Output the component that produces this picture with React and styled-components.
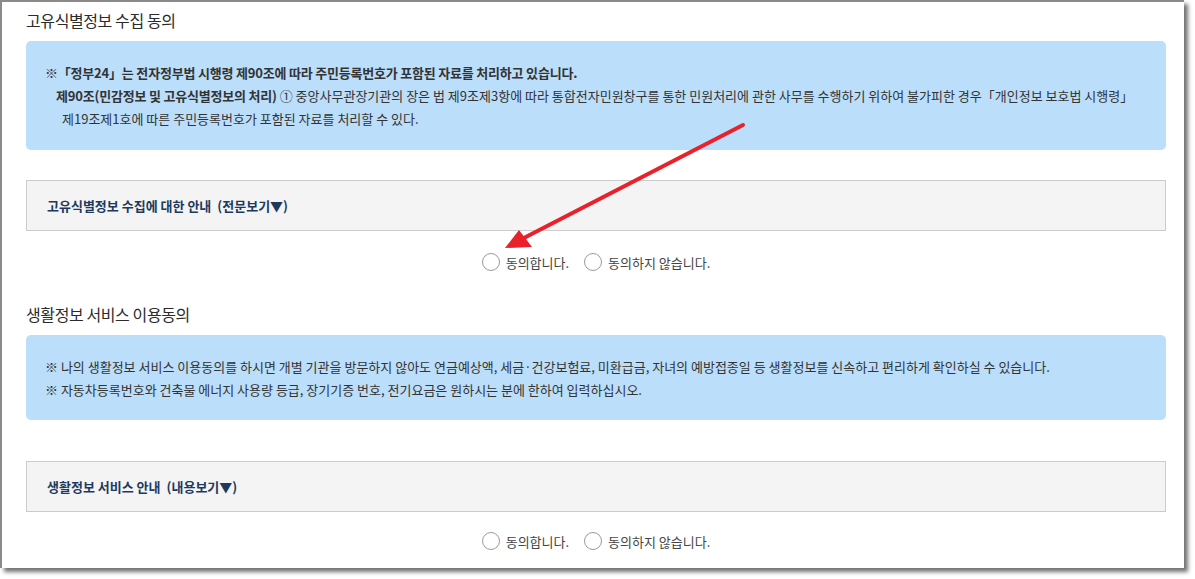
import React from 'react';
import styled, { createGlobalStyle } from 'styled-components';

const GlobalStyle = createGlobalStyle`
  html, body {
    margin: 0;
    padding: 0;
    background: #ffffff;
  }
  body {
    font-family: 'Noto Sans CJK KR', 'Noto Sans', sans-serif;
    color: #333333;
  }
`;

const Stage = styled.div`
  position: relative;
  width: 1195px;
  height: 579px;
  overflow: hidden;
`;

const Window = styled.div`
  box-sizing: border-box;
  width: 1184px;
  height: 568px;
  background: #ffffff;
  border-top: 2px solid #8a8a8a;
  border-left: 2px solid #8a8a8a;
  box-shadow: 4px 4px 4px rgba(0, 0, 0, 0.55);
  padding: 0 18px 0 24px;
  overflow: hidden;
`;

const Section = styled.section`
  display: flex;
  flex-direction: column;
`;

const Title = styled.h2`
  margin: ${(p) => p.$top}px 0 11px;
  font-size: 16px;
  line-height: 20px;
  font-weight: 400;
  letter-spacing: -0.4px;
  color: #2b2b2b;
`;

const Notice = styled.div`
  background: #bbdefa;
  border-radius: 5px;
  padding: 20px 0 ${(p) => p.$bottom}px 19px;
  font-size: 13px;
  line-height: 23px;
  color: #333333;
`;

const Line = styled.p`
  margin: 0;
  padding-left: ${(p) => p.$indent || 0}px;
  white-space: nowrap;
  font-weight: ${(p) => (p.$bold ? 700 : 400)};
  letter-spacing: ${(p) => (p.$bold ? '-0.2px' : 'normal')};
`;

const Strong = styled.b`
  font-weight: 700;
  letter-spacing: -0.2px;
`;

const Guide = styled.div`
  margin-top: ${(p) => p.$top}px;
  height: 49px;
  display: flex;
  align-items: center;
  padding-left: 20px;
  background: #f4f4f4;
  border: 1px solid #cccccc;
  font-size: 13px;
  font-weight: 700;
  color: #1d3a5e;
`;

const Toggle = styled.span`
  margin-left: 6px;
`;

const Choices = styled.div`
  display: flex;
  justify-content: center;
  align-items: center;
  gap: 15px;
  height: 20px;
  margin-top: ${(p) => p.$top}px;
`;

const Choice = styled.label`
  display: flex;
  align-items: center;
  gap: 6px;
  font-size: 13px;
  color: #444444;
`;

const Radio = styled.input.attrs({ type: 'radio' })`
  appearance: none;
  margin: 0;
  width: 18px;
  height: 18px;
  border: 1px solid #9a9a9a;
  border-radius: 50%;
  background: #ffffff;
`;

const Arrow = styled.svg`
  position: absolute;
  left: 0;
  top: 0;
  pointer-events: none;
`;

const Agree = ({ name, top }) => (
  <Choices $top={top}>
    <Choice>
      <Radio name={name} />
      동의합니다.
    </Choice>
    <Choice>
      <Radio name={name} />
      동의하지 않습니다.
    </Choice>
  </Choices>
);

const App = () => {
  return (
    <Stage>
      <GlobalStyle />
      <Window>
        <Section>
          <Title $top={8}>고유식별정보 수집 동의</Title>
          <Notice $bottom={20}>
            <Line $bold>※「정부24」는 전자정부법 시행령 제90조에 따라 주민등록번호가 포함된 자료를 처리하고 있습니다.</Line>
            <Line $indent={11}>
              <Strong>제90조(민감정보 및 고유식별정보의 처리)</Strong> ① 중앙사무관장기관의 장은 법 제9조제3항에 따라
              통합전자민원창구를 통한 민원처리에 관한 사무를 수행하기 위하여 불가피한 경우「개인정보 보호법 시행령」
            </Line>
            <Line $indent={17}>제19조제1호에 따른 주민등록번호가 포함된 자료를 처리할 수 있다.</Line>
          </Notice>
          <Guide $top={30}>고유식별정보 수집에 대한 안내 <Toggle>(전문보기▼)</Toggle></Guide>
          <Agree name='unique' top={21} />
        </Section>

        <Section>
          <Title $top={32}>생활정보 서비스 이용동의</Title>
          <Notice $bottom={19}>
            <Line>
              ※ 나의 생활정보 서비스 이용동의를 하시면 개별 기관을 방문하지 않아도 연금예상액, 세금·건강보험료, 미환급금,
              자녀의 예방접종일 등 생활정보를 신속하고 편리하게 확인하실 수 있습니다.
            </Line>
            <Line>※ 자동차등록번호와 건축물 에너지 사용량 등급, 장기기증 번호, 전기요금은 원하시는 분에 한하여 입력하십시오.</Line>
          </Notice>
          <Guide $top={41}>생활정보 서비스 안내 <Toggle>(내용보기▼)</Toggle></Guide>
          <Agree name='life' top={19} />
        </Section>
      </Window>

      <Arrow width='1195' height='579' viewBox='0 0 1195 579'>
        <line x1='743' y1='125' x2='520' y2='240' stroke='#e8212b' strokeWidth='4' strokeLinecap='round' />
        <polygon points='505,248 519,230 532,247' fill='#e8212b' />
      </Arrow>
    </Stage>
  );
};

export default App;
